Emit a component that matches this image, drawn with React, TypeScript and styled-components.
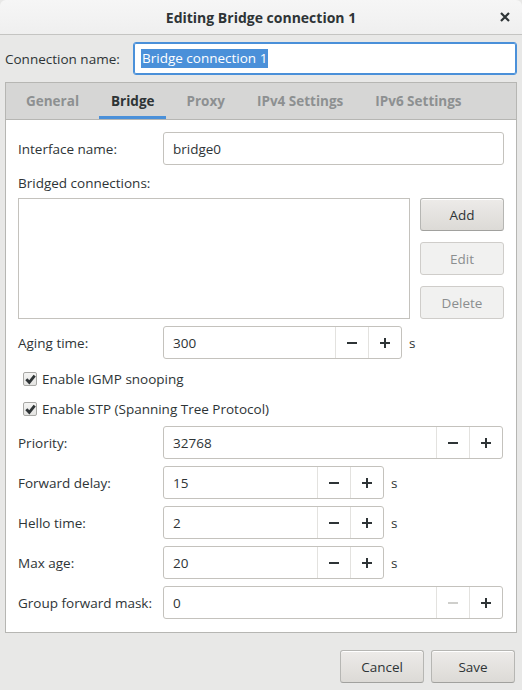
import React from 'react'
import styled, { createGlobalStyle } from 'styled-components'

const GlobalStyle = createGlobalStyle`
  html, body {
    margin: 0;
    padding: 0;
    background: #e8e8e7;
  }
  body {
    font-family: "Open Sans", "Noto Sans", sans-serif;
    font-size: 13px;
    color: #2e3436;
  }
  * { box-sizing: border-box; }
`;

const Window = styled.div`
  width: 522px;
  height: 690px;
  display: flex;
  flex-direction: column;
  background: #e8e8e7;
  overflow: hidden;
`;

const TitleBar = styled.header`
  height: 35px;
  flex-shrink: 0;
  display: grid;
  grid-template-columns: 1fr auto 1fr;
  align-items: center;
  background: linear-gradient(to bottom, #f6f6f6, #efefef);
  border-bottom: 1px solid #c4c4c2;
  border-radius: 6px 6px 0 0;
`;

const Title = styled.h1`
  grid-column: 2;
  margin: 0;
  font-size: 14px;
  font-weight: 700;
  color: #2e3436;
`;

const CloseButton = styled.button`
  grid-column: 3;
  justify-self: end;
  margin-right: 10px;
  width: 14px;
  height: 14px;
  padding: 0;
  border: none;
  background: none;
  display: flex;
  align-items: center;
  justify-content: center;
`;

const Body = styled.div`
  flex: 1;
  display: flex;
  flex-direction: column;
  padding: 7px 5px 0 5px;
`;

const NameRow = styled.div`
  display: flex;
  align-items: center;
  height: 33px;
`;

const NameLabel = styled.label`
  width: 128px;
  flex-shrink: 0;
  font-size: 13.5px;
`;

const FocusEntry = styled.div`
  flex: 1;
  height: 33px;
  display: flex;
  align-items: center;
  padding-left: 7px;
  background: #fff;
  border: 1px solid #4a90d9;
  box-shadow: inset 0 0 0 1px #4a90d9;
  border-radius: 3px;
`;

const Selected = styled.span`
  background: #4a90d9;
  color: #fff;
  font-size: 13.5px;
  line-height: 19px;
  padding: 0 1px;
`;

const Notebook = styled.section`
  margin-top: 7px;
  border: 1px solid #b6b6b3;
  display: flex;
  flex-direction: column;
`;

const TabBar = styled.nav`
  height: 37px;
  display: flex;
  align-items: stretch;
  gap: 8px;
  padding-left: 8px;
  background: #d6d6d5;
  border-bottom: 1px solid #b6b6b3;
`;

const Tab = styled.div<{ $active?: boolean }>`
  display: flex;
  align-items: center;
  padding: 0 12px;
  font-weight: 700;
  font-size: 13.5px;
  color: ${p => (p.$active ? '#2e3436' : '#8d9091')};
  box-shadow: ${p => (p.$active ? 'inset 0 -3px 0 #4a90d9' : 'none')};
`;

const Page = styled.div`
  background: #fff;
  padding: 12px 12px 13px 12px;
  display: flex;
  flex-direction: column;
`;

const Row = styled.div<{ $top?: number }>`
  display: grid;
  grid-template-columns: 145px 1fr;
  align-items: center;
  margin-top: ${p => p.$top ?? 0}px;
`;

const Label = styled.label<{ $top?: number }>`
  display: block;
  line-height: 18px;
  font-size: 13.5px;
  margin-top: ${p => p.$top ?? 0}px;
`;

const FieldLine = styled.div`
  display: flex;
  align-items: center;
`;

const Entry = styled.div`
  height: 33px;
  display: flex;
  align-items: center;
  padding-left: 9px;
  background: #fff;
  border: 1px solid #c4c2bd;
  border-radius: 3px;
  font-size: 13.5px;
`;

const ListRow = styled.div`
  margin-top: 6px;
  display: flex;
  gap: 10px;
`;

const ListBox = styled.div`
  flex: 1;
  height: 121px;
  border: 1px solid #c4c2bd;
  background: #fff;
`;

const ButtonColumn = styled.div`
  width: 84px;
  display: flex;
  flex-direction: column;
  gap: 11px;
`;

const PushButton = styled.button<{ $disabled?: boolean }>`
  height: 33px;
  width: 84px;
  font-family: inherit;
  font-size: 13.5px;
  border-radius: 3px;
  padding: 0;
  color: ${p => (p.$disabled ? '#8b8e8f' : '#2e3436')};
  border: 1px solid ${p => (p.$disabled ? '#cfcdca' : '#b6b6b3')};
  border-bottom-color: ${p => (p.$disabled ? '#cfcdca' : '#a1a19e')};
  background: ${p =>
    p.$disabled
      ? '#f1f1f0'
      : 'linear-gradient(to bottom, #edebe9, #dcdad6)'};
  box-shadow: ${p => (p.$disabled ? 'none' : 'inset 0 1px #fff')};
`;

const Spin = styled.div<{ $width: number }>`
  width: ${p => p.$width}px;
  height: 33px;
  display: flex;
  background: #fff;
  border: 1px solid #c4c2bd;
  border-radius: 3px;
  overflow: hidden;
`;

const SpinValue = styled.div`
  flex: 1;
  display: flex;
  align-items: center;
  padding-left: 9px;
  font-size: 13.5px;
`;

const SpinButton = styled.div`
  width: 33px;
  display: flex;
  align-items: center;
  justify-content: center;
  border-left: 1px solid #e3e2df;
`;

const Unit = styled.span`
  margin-left: 7px;
  font-size: 13.5px;
`;

const CheckRow = styled.label<{ $top: number }>`
  display: flex;
  align-items: center;
  gap: 5px;
  height: 18px;
  margin-top: ${p => p.$top}px;
  margin-left: 5px;
  font-size: 13.5px;
`;

const CheckBox = styled.span`
  width: 14px;
  height: 14px;
  border: 1px solid #a8a8a5;
  border-radius: 2px;
  background: linear-gradient(to bottom, #f4f4f3, #e4e4e2);
  display: flex;
  align-items: center;
  justify-content: center;
`;

const Actions = styled.div`
  margin-top: 17px;
  display: flex;
  justify-content: flex-end;
  gap: 7px;
  padding-right: 2px;
`;

const Minus = ({ disabled }: { disabled?: boolean }) => (
  <svg width="12" height="12" viewBox="0 0 12 12">
    <path d="M1 6h10" stroke={disabled ? '#cfcfcc' : '#2e3436'} strokeWidth="2" />
  </svg>
)

const Plus = () => (
  <svg width="12" height="12" viewBox="0 0 12 12">
    <path d="M1 6h10M6 1v10" stroke="#2e3436" strokeWidth="2" />
  </svg>
)

const Check = () => (
  <svg width="11" height="11" viewBox="0 0 11 11">
    <path d="M1.3 5.3l3 3 5.4-6.6" fill="none" stroke="#2e3436" strokeWidth="2.8" />
  </svg>
)

interface SpinProps {
  value: string
  width: number
  unit?: boolean
  minusDisabled?: boolean
}

const SpinField = ({ value, width, unit, minusDisabled }: SpinProps) => (
  <FieldLine>
    <Spin $width={width}>
      <SpinValue>{value}</SpinValue>
      <SpinButton><Minus disabled={minusDisabled} /></SpinButton>
      <SpinButton><Plus /></SpinButton>
    </Spin>
    {unit && <Unit>s</Unit>}
  </FieldLine>
)

const tabs = ['General', 'Bridge', 'Proxy', 'IPv4 Settings', 'IPv6 Settings']

const stpRows = [
  { label: 'Forward delay:', value: '15' },
  { label: 'Hello time:', value: '2' },
  { label: 'Max age:', value: '20' },
]

const App = () => {
  return (
    <Window>
      <GlobalStyle />
      <TitleBar>
        <Title>Editing Bridge connection 1</Title>
        <CloseButton>
          <svg width="10" height="10" viewBox="0 0 10 10">
            <path d="M1 1l8 8M9 1l-8 8" stroke="#2e3436" strokeWidth="2.2" />
          </svg>
        </CloseButton>
      </TitleBar>
      <Body>
        <NameRow>
          <NameLabel>Connection name:</NameLabel>
          <FocusEntry><Selected>Bridge connection 1</Selected></FocusEntry>
        </NameRow>
        <Notebook>
          <TabBar>
            {tabs.map(t => (
              <Tab key={t} $active={t === 'Bridge'}>{t}</Tab>
            ))}
          </TabBar>
          <Page>
            <Row>
              <Label>Interface name:</Label>
              <Entry>bridge0</Entry>
            </Row>
            <Label $top={9}>Bridged connections:</Label>
            <ListRow>
              <ListBox />
              <ButtonColumn>
                <PushButton>Add</PushButton>
                <PushButton $disabled>Edit</PushButton>
                <PushButton $disabled>Delete</PushButton>
              </ButtonColumn>
            </ListRow>
            <Row $top={7}>
              <Label>Aging time:</Label>
              <SpinField value="300" width={239} unit />
            </Row>
            <CheckRow $top={11}>
              <CheckBox><Check /></CheckBox>
              Enable IGMP snooping
            </CheckRow>
            <CheckRow $top={12}>
              <CheckBox><Check /></CheckBox>
              Enable STP (Spanning Tree Protocol)
            </CheckRow>
            <Row $top={8}>
              <Label>Priority:</Label>
              <SpinField value="32768" width={340} />
            </Row>
            {stpRows.map(r => (
              <Row key={r.label} $top={7}>
                <Label>{r.label}</Label>
                <SpinField value={r.value} width={221} unit />
              </Row>
            ))}
            <Row $top={7}>
              <Label>Group forward mask:</Label>
              <SpinField value="0" width={340} minusDisabled />
            </Row>
          </Page>
        </Notebook>
        <Actions>
          <PushButton>Cancel</PushButton>
          <PushButton>Save</PushButton>
        </Actions>
      </Body>
    </Window>
  )
}

export default App
